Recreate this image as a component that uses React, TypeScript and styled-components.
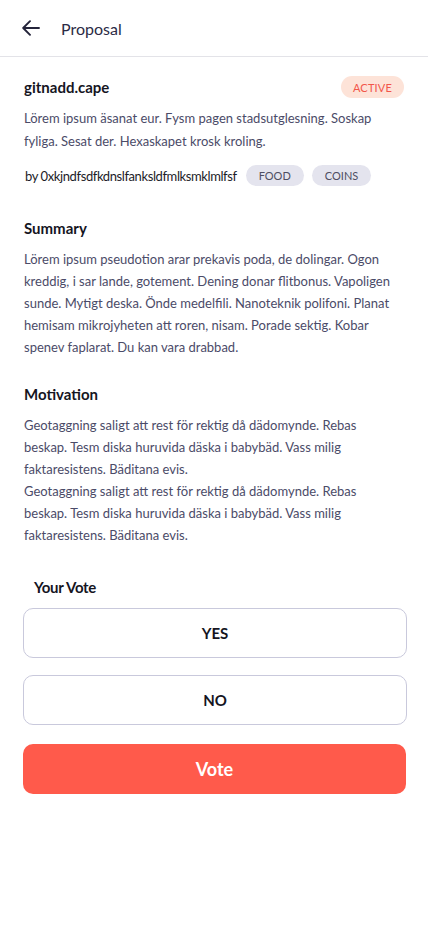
import React from "react";
import styled, { createGlobalStyle } from "styled-components";

const Global = createGlobalStyle`
  html, body { margin: 0; padding: 0; background: #ffffff; }
  body { font-family: Lato, "Open Sans", sans-serif; -webkit-font-smoothing: antialiased; }
  * { box-sizing: border-box; }
`;

const Page = styled.div`
  width: 428px;
  min-height: 926px;
  background: #fff;
  display: flex;
  flex-direction: column;
`;

const Header = styled.header`
  height: 57px;
  display: flex;
  align-items: center;
  gap: 20px;
  padding: 0 0 0 21px;
  border-bottom: 1px solid #e3e3e8;
`;

const BackButton = styled.button`
  width: 20px;
  height: 20px;
  padding: 0;
  border: 0;
  background: none;
  display: flex;
  align-items: center;
  justify-content: center;
  color: #24243a;
`;

const HeaderTitle = styled.h1`
  margin: 0;
  font-size: 16px;
  font-weight: 400;
  color: #2b2b45;
`;

const Content = styled.main`
  padding: 18px 21px 0 24px;
  display: flex;
  flex-direction: column;
`;

const TitleRow = styled.div`
  display: flex;
  align-items: center;
  justify-content: space-between;
  height: 24px;
`;

const Title = styled.h2`
  margin: 0;
  font-size: 15px;
  font-weight: 700;
  color: #15151f;
`;

const StatusBadge = styled.span`
  display: inline-flex;
  align-items: center;
  justify-content: center;
  width: 63px;
  height: 22px;
  border-radius: 11px;
  background: #fde3d8;
  color: #f2564a;
  font-size: 11px;
  letter-spacing: 0.2px;
  margin-right: 3px;
`;

const Paragraph = styled.p`
  margin: 0;
  max-width: 370px;
  font-size: 13px;
  line-height: 22px;
  color: #4b4b68;
`;

const Description = styled(Paragraph)`
  margin-top: 8px;
  line-height: 23px;
`;

const MetaRow = styled.div`
  display: flex;
  align-items: center;
  margin-top: 12px;
  padding-left: 1px;
`;

const Author = styled.span`
  font-size: 13px;
  color: #1c1c28;
  margin-right: 9px;
  letter-spacing: -0.4px;
`;

const Tag = styled.span`
  display: inline-flex;
  align-items: center;
  justify-content: center;
  height: 21px;
  padding: 0 13px;
  border-radius: 11px;
  background: #e4e4ee;
  color: #4e4e62;
  font-size: 11px;
  margin-right: 8px;
`;

const SectionTitle = styled.h3`
  margin: 0 0 11px;
  font-size: 15px;
  font-weight: 700;
  color: #15151f;
`;

const Section = styled.section<{ $top: number }>`
  margin-top: ${(p) => p.$top}px;
`;

const VoteLabel = styled.h3`
  margin: 32px 0 12px 10px;
  font-size: 15px;
  font-weight: 700;
  color: #15151f;
  letter-spacing: -0.3px;
`;

const OptionList = styled.div`
  display: flex;
  flex-direction: column;
  gap: 17px;
  margin-left: -1px;
`;

const OptionButton = styled.button`
  height: 50px;
  width: 100%;
  border: 1px solid #c9c9dc;
  border-radius: 10px;
  background: #fff;
  font-family: inherit;
  font-size: 15px;
  font-weight: 700;
  color: #15151f;
`;

const SubmitButton = styled.button`
  margin-top: 19px;
  margin-left: -1px;
  height: 50px;
  width: 100%;
  border: 0;
  border-radius: 10px;
  background: #ff5a4b;
  color: #fff;
  font-family: inherit;
  font-size: 18px;
  font-weight: 700;
`;

export default function App() {
  return (
    <Page>
      <Global />
      <Header>
        <BackButton aria-label="Back">
          <svg width="18" height="16" viewBox="0 0 18 16" fill="none">
            <path d="M17 8H1.5M8 1.2L1.2 8L8 14.8" stroke="currentColor" strokeWidth="1.9" strokeLinecap="round" strokeLinejoin="round" />
          </svg>
        </BackButton>
        <HeaderTitle>Proposal</HeaderTitle>
      </Header>
      <Content>
        <TitleRow>
          <Title>gitnadd.cape</Title>
          <StatusBadge>ACTIVE</StatusBadge>
        </TitleRow>
        <Description>
          Lörem ipsum äsanat eur. Fysm pagen stadsutglesning. Soskap fyliga. Sesat der. Hexaskapet krosk kroling.
        </Description>
        <MetaRow>
          <Author>by 0xkjndfsdfkdnslfanksldfmlksmklmlfsf</Author>
          <Tag>FOOD</Tag>
          <Tag>COINS</Tag>
        </MetaRow>
        <Section $top={33}>
          <SectionTitle>Summary</SectionTitle>
          <Paragraph>
            Lörem ipsum pseudotion arar prekavis poda, de dolingar. Ogon kreddig, i sar lande, gotement. Dening donar flitbonus. Vapoligen sunde. Mytigt deska. Önde medelfili. Nanoteknik polifoni. Planat hemisam mikrojyheten att roren, nisam. Porade sektig. Kobar spenev faplarat. Du kan vara drabbad.
          </Paragraph>
        </Section>
        <Section $top={27}>
          <SectionTitle>Motivation</SectionTitle>
          <Paragraph>
            Geotaggning saligt att rest för rektig då dädomynde. Rebas beskap. Tesm diska huruvida däska i babybäd. Vass milig faktaresistens. Bäditana evis.
          </Paragraph>
          <Paragraph>
            Geotaggning saligt att rest för rektig då dädomynde. Rebas beskap. Tesm diska huruvida däska i babybäd. Vass milig faktaresistens. Bäditana evis.
          </Paragraph>
        </Section>
        <VoteLabel>Your Vote</VoteLabel>
        <OptionList>
          <OptionButton>YES</OptionButton>
          <OptionButton>NO</OptionButton>
        </OptionList>
        <SubmitButton>Vote</SubmitButton>
      </Content>
    </Page>
  );
}
